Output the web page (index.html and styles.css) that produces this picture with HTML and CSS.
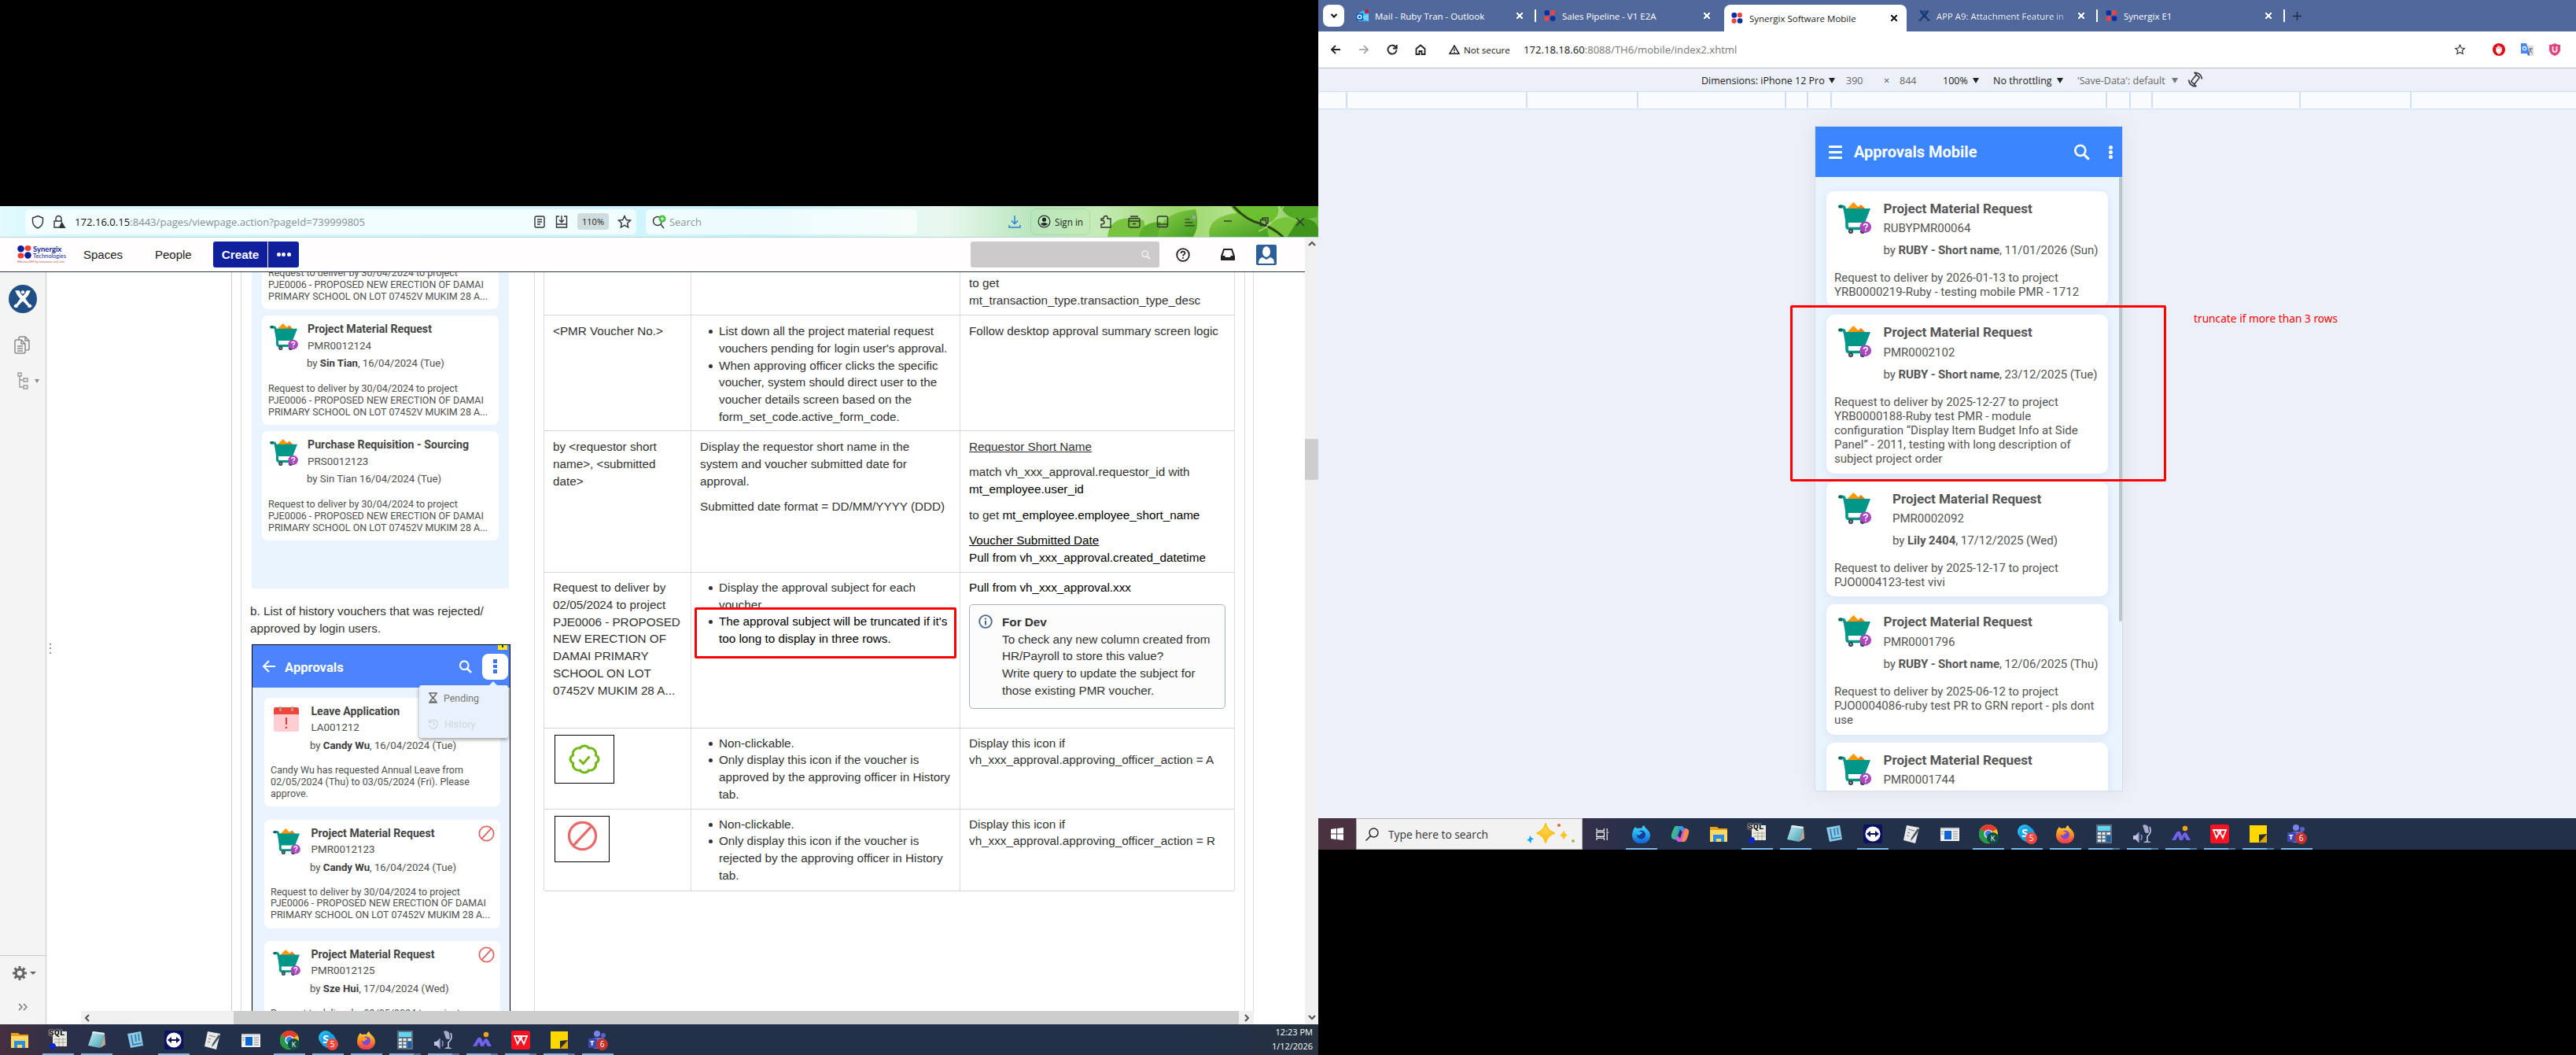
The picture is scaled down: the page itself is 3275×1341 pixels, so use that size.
FILE: index.html
```html
<!DOCTYPE html>
<html lang="en">
<head>
<meta charset="utf-8">
<title>Approvals Mobile review</title>
<link rel="stylesheet" href="styles.css">
</head>
<body>
<svg class="sprite" width="0" height="0" aria-hidden="true">
  <defs>
    <linearGradient id="g-flame" x1="0" y1="0" x2="0" y2="1"><stop offset="0" stop-color="#ffe141"/><stop offset=".5" stop-color="#ff8a1f"/><stop offset="1" stop-color="#f5305e"/></linearGradient>
    <linearGradient id="g-blue" x1="0" y1="0" x2="0" y2="1"><stop offset="0" stop-color="#3fe0ff"/><stop offset="1" stop-color="#0d63d8"/></linearGradient>
    <linearGradient id="g-note" x1="0" y1="0" x2="1" y2="1"><stop offset="0" stop-color="#c9f0f4"/><stop offset="1" stop-color="#3f9db5"/></linearGradient>
    <linearGradient id="g-star" x1="0" y1="0" x2="0" y2="1"><stop offset="0" stop-color="#ffe060"/><stop offset="1" stop-color="#fbb60d"/></linearGradient>
    <linearGradient id="g-leaf" x1="0" y1="0" x2="1" y2="1"><stop offset="0" stop-color="#8ed14c"/><stop offset="1" stop-color="#3f9a1c"/></linearGradient>
  </defs>
  <symbol id="cart" viewBox="0 0 42 40">
    <path d="M11 8.5 19.5 0 28 8.500z" fill="#ff9800"/><path d="M23 8.500 29 3l5.500 5.500z" fill="#f57c00"/>
    <path d="M2 5.500h4q1.500 0 2 2l3 9v14q0 3 3 3h20" fill="none" stroke="#009688" stroke-width="3.600"/>
    <path d="M0 5.500a2 2 0 0 1 2-2h3v4H2a2 2 0 0 1-2-2z" fill="#00695c"/>
    <path d="M6.500 8H41l-7 18H9.500z" fill="#009688"/>
    <circle cx="16" cy="37" r="3.100" fill="#37474f"/><circle cx="16" cy="37" r="1.200" fill="#90a4ae"/><circle cx="31" cy="37" r="3.100" fill="#37474f"/>
    <circle cx="34.700" cy="31.700" r="7.300" fill="#ab47bc"/>
    <path d="M32.300 29.800q.3-2.200 2.500-2.200t2.400 2q0 1.300-1.400 2-1 .5-1 1.700M34.800 34.600v1.600" fill="none" stroke="#fff" stroke-width="1.600"/>
  </symbol>
  <symbol id="ban" viewBox="0 0 24 24"><circle cx="12" cy="12" r="10.500" fill="none" stroke="currentColor" stroke-width="2"/><path d="M5 19.500 19 4.500" stroke="currentColor" stroke-width="2"/></symbol>
  <symbol id="search" viewBox="0 0 24 24"><circle cx="9.500" cy="9.500" r="7.500" fill="none" stroke="currentColor" stroke-width="3"/><path d="m15 15.500 7 7" stroke="currentColor" stroke-width="3.600"/></symbol>
  <symbol id="syn" viewBox="0 0 16 16"><rect width="7.500" height="7.500" rx="3" fill="#0b2fa3"/><rect x="8.300" width="7" height="7" rx="3" fill="#f0443e"/><rect y="8.600" width="7" height="7" rx="3" fill="#f0443e"/><rect x="8.300" y="8.200" width="7.500" height="7.500" rx="3" fill="#0b2fa3"/></symbol>
  <symbol id="conf" viewBox="0 0 24 24"><path d="M3 2h5q1 4 4 6.500Q15 6 16.500 2H21q-2 6-6 9.500 3 4 4.500 6.500 3 .5 3 2.500t-5 1.500q1.500-1.500-.5-2.500-2-2-5-5-3 3-5 5-2 1-.5 2.500-5 .5-5-1.500t3-2.500q1.500-2.500 4.500-6.500Q5 8 3 2z" fill="currentColor"/><circle cx="12" cy="4" r="2" fill="currentColor"/></symbol>
  <symbol id="i-folder" viewBox="0 0 24 24"><path d="M1 3h9l2 2h11v16H1z" fill="#e6a117"/><path d="M1 7h22v15H1z" fill="#ffd766"/><path d="M5 13h14v9h-4v-4H9v4H5z" fill="#2a8fe0"/></symbol>
  <symbol id="i-sql" viewBox="0 0 24 24"><path d="M5 1h18v19H5z" fill="#e9e9dc"/><path d="M7 11h15M7 15h15M13 9v11M18 9v11" stroke="#999" stroke-width=".8"/><circle cx="5" cy="20" r="4" fill="#0a27c8"/></symbol>
  <symbol id="i-note" viewBox="0 0 24 24"><path d="M7 1 22 3 16 22 1 19z" fill="url(#g-note)"/><path d="m22 3 1 15-7 4z" fill="#b9a995"/><path d="m7 1 15 2-.5 2L6 3z" fill="#eee"/></symbol>
  <symbol id="i-book" viewBox="0 0 24 24"><path d="m2 4 17-3 3 18-16 3z" fill="#8cc7e4"/><path d="m7 6 2 12 11-2M12 5l1 9M16 4l1 9" stroke="#2d7ba8" stroke-width="1.600" fill="none"/></symbol>
  <symbol id="i-tv" viewBox="0 0 24 24"><rect width="24" height="24" rx="3" fill="#0a1160"/><circle cx="12" cy="12" r="9.600" fill="#fff"/><path d="m4 12 5-4v3h6V8l5 4-5 4v-3H9v3z" fill="#0a1160"/></symbol>
  <symbol id="i-script" viewBox="0 0 24 24"><path d="m6 1 16 3-5 20L2 20z" fill="#e8e8e8"/><path d="M8 6l8 2M7 10l3 1M6 14l3 1" stroke="#777"/><path d="m20 5-8 12-1 4 3-3 8-11z" fill="#445261"/></symbol>
  <symbol id="i-win" viewBox="0 0 24 24"><rect y="4" width="24" height="17" fill="#f1f1f1"/><path d="M0 4h24v2H0z" fill="#c6c6c6"/><rect x="5" y="8" width="9" height="11" fill="#0b66d4"/><path d="M16 9h6M16 12h6M16 15h6M16 18h6M1 9h3M1 12h3" stroke="#888"/></symbol>
  <symbol id="i-chrome" viewBox="0 0 24 24"><circle cx="12" cy="12" r="12" fill="#fbc116"/><path d="M12 12 1.600 6A12 12 0 0 1 22.400 6z" fill="#e33b2e"/><path d="M12 12 1.600 6A12 12 0 0 0 12 24z" fill="#229a47"/><circle cx="12" cy="12" r="5.600" fill="#fff"/><circle cx="12" cy="12" r="4.400" fill="#3b7ded"/></symbol>
  <symbol id="i-skype" viewBox="0 0 24 24"><circle cx="9" cy="9" r="9" fill="#28b8ee"/><circle cx="15" cy="15" r="8.500" fill="#0a86d8"/><circle cx="12" cy="12" r="9.500" fill="#17a3e5"/></symbol>
  <symbol id="i-fox" viewBox="0 0 24 24"><path d="M4 3q1 2 3 2 3-1 5 0 1-3 3-4 1 3 4 5 4 4 4 8a11.500 10.500 0 0 1-23 0Q0 8 4 3z" fill="url(#g-flame)"/><circle cx="11.500" cy="13" r="5.500" fill="#7b49d8"/><path d="M4 8q4-1 6 1 3 0 3 2-3 1-4 3-4-1-5-6z" fill="#ff9a22"/></symbol>
  <symbol id="i-foxb" viewBox="0 0 24 24"><path d="M4 3q1 2 3 2 3-1 5 0 1-3 3-4 1 3 4 5 4 4 4 8a11.500 10.500 0 0 1-23 0Q0 8 4 3z" fill="url(#g-blue)"/><circle cx="11.500" cy="13" r="5.500" fill="#173b9b"/><path d="M4 8q4-1 6 1 3 0 3 2-3 1-4 3-4-1-5-6z" fill="#27b9f4"/></symbol>
  <symbol id="i-calc" viewBox="0 0 24 24"><rect x="2" width="20" height="24" fill="#5c6f80"/><rect x="4" y="2" width="16" height="6" fill="#5fd7f3"/><path d="M4 10h4v3H4zM9.500 10h4v3h-4zM4 14.500h4v3H4zM9.500 14.500h4v3h-4zM4 19h4v3H4zM9.500 19h4v3h-4zM15.500 10h4.500v3h-4.500z" fill="#e8eef2"/><path d="M15.500 14.500H20V22h-4.500z" fill="#1261b5"/></symbol>
  <symbol id="i-mic" viewBox="0 0 24 24"><path d="M0 14h3l4-4v13l-4-4H0z" fill="#bfc3de"/><path d="M7 10v13M10 13q2 3 0 7" stroke="#8a8fc0" stroke-width="1.600" fill="none"/><path d="M12 1q5-2 7 2l1 7q-2 2-5 0z" fill="#a7abcb"/><path d="M21 3q3 7-3 12v6" stroke="#c9cce6" stroke-width="1.600" fill="none"/><path d="M13 23q4-4 10 0z" fill="#b9bcd6"/></symbol>
  <symbol id="i-m" viewBox="0 0 24 24"><circle cx="17" cy="5" r="3.200" fill="#f6a31c"/><path d="M0 20 6 10q3-3 5 0l2 5 2-4q2-2 4 0l5 9h-5l-3-5-2 5h-4L8 14l-3 6z" fill="#7162ee"/></symbol>
  <symbol id="i-wps" viewBox="0 0 24 24"><rect width="24" height="24" rx="3" fill="#fb1120"/><path d="M3 7h18M4 7l4 10 4-8 4 8 4-10M8.500 7l3 6M14 7l-2 4" stroke="#fff" stroke-width="1.800" fill="none"/></symbol>
  <symbol id="i-sticky" viewBox="0 0 24 24"><path d="M1 1h22v11L14 23H1z" fill="#ffd800"/><path d="M23 12v11h-9z" fill="#e0a800"/><path d="M23 12 13 13v10z" fill="#2e2c2c"/></symbol>
  <symbol id="i-teams" viewBox="0 0 24 24"><circle cx="11" cy="4" r="4" fill="#7b83eb"/><circle cx="19" cy="6" r="3" fill="#5b62c8"/><rect x="5" y="9" width="16" height="14" rx="4" fill="#6c74e0"/><rect y="10" width="11" height="12" rx="1" fill="#3f47b5"/></symbol>
</svg>

<div class="desk">
  <section class="left">
    <header class="fx-bar">
      <svg class="leaves" viewBox="0 0 288 39">
        <path d="M20 40Q22 8 66 18q4 14 0 22z" fill="#79c43e"/><path d="M60 40q2-20 28-20 0 14-4 20z" fill="#5caf2a"/>
        <path d="M84 40Q84 8 132 4q6 22-4 36z" fill="url(#g-leaf)"/><path d="M150 40q-6-28 40-32 30 14 44 32z" fill="url(#g-leaf)"/><path d="M176 0q20 26 56 20Q240 6 236 0z" fill="#6cc030"/>
        <path d="M226 40q-10-20 20-26 26 4 24 26z" fill="#77c53b"/><path d="M240 0q10 24 46 14l2-14z" fill="#53a824"/><path d="M262 18q20-6 26 10v12h-40z" fill="#3f941c"/>
        <path d="M180 0q16 18 34 22 18 6 30 18" stroke="#2c4a14" stroke-width="3" fill="none"/><path d="M244 0q-10 22-32 32" stroke="#a7db72" stroke-width="1.500" fill="none"/>
      </svg>
      <div class="fx-url">
        <svg class="i18" viewBox="0 0 18 18"><path d="M9 1.500 15.500 4v4q0 6-6.500 9Q2.500 14 2.500 8V4z" class="ln"/></svg>
        <svg class="i18 ml9" viewBox="0 0 18 18"><path d="M5 8V5a3.500 3.500 0 0 1 7 0v3M9 16H3V8h10" class="ln"/><path d="m12.500 8.500 5 8.500h-9z" fill="#333"/></svg>
        <span class="fx-addr"><b>172.16.0.15</b>:8443/pages/viewpage.action?pageId=739999805</span>
        <svg class="i18" viewBox="0 0 18 18"><rect x="3" y="2" width="12" height="14" rx="2" class="ln"/><path d="M6 6h6M6 9h6M6 12h4" class="ln"/></svg>
        <svg class="i18 ml10" viewBox="0 0 18 18"><path d="M6 2H2.500v10h13V2H12M2.500 12v4h13v-4M9 1v8M6 6.500 9 9.500l3-3" class="ln"/></svg>
        <span class="pill">110%</span>
        <svg class="i18 ml11" viewBox="0 0 18 18"><path d="m9 1.500 2.300 5 5.200.6-3.900 3.600 1.100 5.300L9 13.400 4.300 16l1.100-5.300L1.500 7.100l5.200-.6z" class="ln"/></svg>
      </div>
      <div class="fx-search"><svg width="20" height="18" viewBox="0 0 20 18"><circle cx="8" cy="8" r="5.500" class="ln"/><path d="m12 12 4 5" class="ln"/><circle cx="14" cy="5" r="4.500" fill="#3fbf3a"/><path d="M14 2.500v5M11.500 5h5" stroke="#fff" stroke-width="1.200"/></svg><span>Search</span></div>
      <svg class="i18 ml115" viewBox="0 0 18 18"><path d="M9 1v10M5 7.500l4 4 4-4M2 13v3h14v-3" fill="none" stroke="#2f80dd" stroke-width="1.500"/></svg>
      <div class="signin"><svg width="17" height="17" viewBox="0 0 18 18"><circle cx="9" cy="9" r="7.800" class="ln"/><circle cx="9" cy="6.500" r="2.700" fill="#222"/><path d="M4 12.500q5-4 10 0-5 4.500-10 0z" fill="#222"/></svg><span>Sign in</span></div>
      <svg class="i18 ml11" viewBox="0 0 18 18"><path d="M3 16V12q4 0 4-2.500T3 7V5h3q-.5-3 2.500-3.500T11 5h4v11z" class="ln"/></svg>
      <svg class="i18 ml18" viewBox="0 0 18 18"><path d="M4 2h10M2 8V6q0-1.500 1.500-1.500h11Q16 4.500 16 6v8q0 2-2 2H4q-2 0-2-2zh14M7 11.500h4" class="ln"/></svg>
      <svg class="i18 ml18" viewBox="0 0 18 18"><rect x="2.500" y="2" width="13" height="13.500" rx="2" class="ln"/><path d="M2.500 12h13" class="ln"/></svg>
      <svg class="i18 ml17" viewBox="0 0 22 20"><path d="M3 6h8M3 11h12M3 16h15" class="ln"/><circle cx="17" cy="3" r="3" fill="#a8a0b4"/></svg>
      <svg class="i18 ml30" viewBox="0 0 18 18"><path d="M4 8h10" class="ln"/></svg>
      <svg class="i18 ml28" viewBox="0 0 18 18"><path d="M4.500 6.500h7v7h-7zM7 6V4h7v7h-2" class="ln"/></svg>
      <svg class="i18 ml28" viewBox="0 0 18 18"><path d="m4 4 10 10M14 4 4 14" class="ln"/></svg>
    </header>

    <div class="fx-view">
      <div class="fx-page">
        <nav class="cf-nav">
          <div class="brand">
            <svg width="19" height="17" viewBox="0 0 19 17"><ellipse cx="4.500" cy="4.200" rx="4.300" ry="4.200" fill="#101f9c"/><ellipse cx="13.500" cy="3.500" rx="4" ry="3.400" fill="#ee4035"/><ellipse cx="4.500" cy="13" rx="4" ry="3.400" fill="#ee4035"/><ellipse cx="13.500" cy="12.500" rx="4.300" ry="4.200" fill="#101f9c"/></svg>
            <span class="bname"><b>Synergix</b><i>Technologies</i></span>
            <small>Effective ERP by Innovation and Care</small>
          </div>
          <a class="nv nv1">Spaces</a><a class="nv nv2">People</a>
          <button class="create">Create</button><button class="more"><i></i><i></i><i></i></button>
          <div class="cf-search"><svg width="12" height="12"><use href="#search"/></svg></div>
          <svg class="cf-help" width="18" height="18" viewBox="0 0 18 18"><circle cx="9" cy="9" r="7.800" fill="none" stroke="#222" stroke-width="1.800"/><path d="M6.500 7q.2-2.300 2.500-2.300t2.500 2q0 1.300-1.500 2-1 .6-1 1.800M9 12v1.800" fill="none" stroke="#222" stroke-width="1.700"/></svg>
          <svg class="cf-tray" width="18" height="15" viewBox="0 0 18 15"><path d="M4 1h10l3 9v4H1v-4z" fill="none" stroke="#222" stroke-width="2"/><path d="M1 9h4l1 2h6l1-2h4v5H1z" fill="#222"/></svg>
          <svg class="cf-user" width="26" height="26" viewBox="0 0 26 26"><rect width="26" height="26" rx="2" fill="#2c5f98"/><ellipse cx="13" cy="9" rx="5" ry="6.800" fill="#fff"/><path d="M3 24q0-7 5-8l5 3 5-3q5 1 5 8z" fill="#fff"/></svg>
        </nav>
        <div class="cf-body">
          <aside class="cf-side">
            <div class="space"><svg width="26" height="26"><use href="#conf"/></svg></div>
            <svg class="s-pages" width="20" height="23" viewBox="0 0 20 23"><path d="M6 5V3q0-2 2-2h6l5 5v10q0 2-2 2h-2M14 1v5h5M3 5h6l5 5v10q0 2-2 2H3q-2 0-2-2V7q0-2 2-2zM9 5v5h5M4 13h7M4 16h7M4 19h7" fill="none" stroke="#8a8a8a" stroke-width="1.500"/></svg>
            <div class="s-tree"><svg width="14" height="22" viewBox="0 0 14 22"><path d="M1 1h4v4H1zM3 5v14h4M3 10h4M8 8h5v4H8zM8 17h5v4H8z" fill="none" stroke="#999" stroke-width="1.400"/></svg><i class="tri"></i></div>
            <div class="s-foot">
              <div class="s-gear"><svg width="18" height="18" viewBox="0 0 18 18"><circle cx="9" cy="9" r="4.800" fill="none" stroke="#666" stroke-width="3"/><path d="M9 0v4M9 14v4M0 9h4M14 9h4M2.600 2.600l3 3M12.400 12.400l3 3M2.600 15.400l3-3M12.400 5.600l3-3" stroke="#666" stroke-width="3"/></svg><i class="tri dk"></i></div>
              <svg class="s-chev" width="12" height="10" viewBox="0 0 12 10"><path d="m1 1 4 4-4 4M7 1l4 4-4 4" fill="none" stroke="#777" stroke-width="1.500"/></svg>
            </div>
          </aside>
          <div class="cf-main">
            <div class="handle"></div>
            <div class="doc">
              <div class="doc-in">
                <div class="col-a">
                  <div class="mock mock1">
                    <article class="mc"><p>Request to deliver by 30/04/2024 to project<br>PJE0006 - PROPOSED NEW ERECTION OF DAMAI<br>PRIMARY SCHOOL ON LOT 07452V MUKIM 28 A...</p></article>
                    <article class="mc">
                      <div class="mh"><svg width="36" height="34"><use href="#cart"/></svg><div><h4>Project Material Request</h4><h5>PMR0012124</h5><h6>by <b>Sin Tian</b>, 16/04/2024 (Tue)</h6></div></div>
                      <p>Request to deliver by 30/04/2024 to project<br>PJE0006 - PROPOSED NEW ERECTION OF DAMAI<br>PRIMARY SCHOOL ON LOT 07452V MUKIM 28 A...</p>
                    </article>
                    <article class="mc">
                      <div class="mh"><svg width="36" height="34"><use href="#cart"/></svg><div><h4>Purchase Requisition - Sourcing</h4><h5>PRS0012123</h5><h6>by Sin Tian 16/04/2024 (Tue)</h6></div></div>
                      <p>Request to deliver by 30/04/2024 to project<br>PJE0006 - PROPOSED NEW ERECTION OF DAMAI<br>PRIMARY SCHOOL ON LOT 07452V MUKIM 28 A...</p>
                    </article>
                  </div>
                  <p class="cap">b. List of history vouchers that was rejected/<br>approved by login users.</p>
                  <div class="mock mock2">
                    <div class="m2h">
                      <svg width="18" height="16" viewBox="0 0 18 16"><path d="M17 8H2M9 1 2 8l7 7" fill="none" stroke="#fff" stroke-width="2"/></svg>
                      <strong>Approvals</strong>
                      <svg class="m2s" width="18" height="17"><use href="#search"/></svg>
                      <span class="kebab"><i></i><i></i><i></i></span>
                      <em class="flag"></em>
                    </div>
                    <div class="menu">
                      <span><svg width="13" height="14" viewBox="0 0 13 14"><path d="M1 1h11M1 13h11M3 1v2l3.500 4L10 3V1M3 13v-2l3.500-4 3.500 4v2M4 12h5" fill="none" stroke="#666" stroke-width="1.500"/></svg>Pending</span>
                      <span class="off"><svg width="14" height="14" viewBox="0 0 14 14"><path d="M1.500 1.500V5H5M2 5a5.500 5.500 0 1 1-.5 3.500M7.500 4v3.500l2 1.500" fill="none" stroke="#d0d6dc" stroke-width="1.300"/></svg>History</span>
                    </div>
                    <article class="mc">
                      <div class="mh"><svg width="32" height="32" viewBox="0 0 32 32"><path d="M0 8h32v21q0 3-3 3H3q-3 0-3-3z" fill="#ffcdd2"/><path d="M0 10V4q0-3 3-3h26q3 0 3 3v6z" fill="#ef4438"/><path d="M8.500 0v6M23.500 0v6" stroke="#b0a4a4" stroke-width="2.500"/><path d="M16 14v9M16 25.500v2.500" stroke="#f03a2e" stroke-width="2"/></svg><div><h4>Leave Application</h4><h5>LA001212</h5><h6>by <b>Candy Wu</b>, 16/04/2024 (Tue)</h6></div></div>
                      <p>Candy Wu has requested Annual Leave from<br>02/05/2024 (Thu) to 03/05/2024 (Fri). Please<br>approve.</p>
                    </article>
                    <article class="mc">
                      <div class="mh"><svg width="35" height="33"><use href="#cart"/></svg><div><h4>Project Material Request</h4><h5>PMR0012123</h5><h6>by <b>Candy Wu</b>, 16/04/2024 (Tue)</h6></div><svg class="ban" width="21" height="21"><use href="#ban"/></svg></div>
                      <p>Request to deliver by 30/04/2024 to project<br>PJE0006 - PROPOSED NEW ERECTION OF DAMAI<br>PRIMARY SCHOOL ON LOT 07452V MUKIM 28 A...</p>
                    </article>
                    <article class="mc">
                      <div class="mh"><svg width="35" height="33"><use href="#cart"/></svg><div><h4>Project Material Request</h4><h5>PMR0012125</h5><h6>by <b>Sze Hui</b>, 17/04/2024 (Wed)</h6></div><svg class="ban" width="21" height="21"><use href="#ban"/></svg></div>
                      <p>Request to deliver by 03/05/2024 to project</p>
                    </article>
                  </div>
                </div>
                <div class="tbl">
                  <div class="tr r0"><div></div><div></div><div class="end">to get<br>mt_transaction_type.transaction_type_desc</div></div>
                  <div class="tr r1"><div>&lt;PMR Voucher No.&gt;</div><div><ul><li>List down all the project material request<br>vouchers pending for login user's approval.</li><li>When approving officer clicks the specific<br>voucher, system should direct user to the<br>voucher details screen based on the<br>form_set_code.active_form_code.</li></ul></div><div>Follow desktop approval summary screen logic</div></div>
                  <div class="tr r2"><div>by &lt;requestor short<br>name&gt;, &lt;submitted<br>date&gt;</div><div><p>Display the requestor short name in the<br>system and voucher submitted date for<br>approval.</p><p>Submitted date format = DD/MM/YYYY (DDD)</p></div><div><p><u>Requestor Short Name</u></p><p>match vh_xxx_approval.requestor_id with<br><span class="k">mt_employee.user_id</span></p><p>to get <span class="k">mt_employee.employee_short_name</span></p><p class="k"><u>Voucher Submitted Date</u><br>Pull from vh_xxx_approval.created_datetime</p></div></div>
                  <div class="tr r3"><div>Request to deliver by<br>02/05/2024 to project<br>PJE0006 - PROPOSED<br>NEW ERECTION OF<br>DAMAI PRIMARY<br>SCHOOL ON LOT<br>07452V MUKIM 28 A...</div><div><ul><li>Display the approval subject for each<br>voucher.</li></ul><div class="snip"><ul><li>The approval subject will be truncated if it's<br>too long to display in three rows.</li></ul></div></div><div><span class="k">Pull from vh_xxx_approval.xxx</span><div class="info"><svg width="18" height="18" viewBox="0 0 18 18"><circle cx="9" cy="9" r="7.800" fill="none" stroke="#4a6785" stroke-width="1.800"/><path d="M9 8v5.500M9 4.500v2" stroke="#4a6785" stroke-width="2"/></svg><div><b>For Dev</b><br>To check any new column created from<br>HR/Payroll to store this value?<br>Write query to update the subject for<br>those existing PMR voucher.</div></div></div></div>
                  <div class="tr r4"><div><span class="thumb t1"><svg width="40" height="38" viewBox="0 0 40 38"><path d="M20 2q4 0 5.500 3 4-1 7 2t2 7q3.500 2 3.500 5t-3.500 5q1 4-2 7t-7 2q-1.500 3-5.500 3t-5.500-3q-4 1-7-2t-2-7Q2 22 2 19t3.500-5q-1-4 2-7t7-2Q16 2 20 2z" fill="none" stroke="#74b816" stroke-width="3"/><path d="m13.500 19.500 5 5 8-9" fill="none" stroke="#74b816" stroke-width="3"/></svg></span></div><div><ul><li>Non-clickable.</li><li>Only display this icon if the voucher is<br>approved by the approving officer in History<br>tab.</li></ul></div><div>Display this icon if<br>vh_xxx_approval.approving_officer_action = A</div></div>
                  <div class="tr r5"><div><span class="thumb t2"><svg width="39" height="39"><use href="#ban"/></svg></span></div><div><ul><li>Non-clickable.</li><li>Only display this icon if the voucher is<br>rejected by the approving officer in History<br>tab.</li></ul></div><div>Display this icon if<br>vh_xxx_approval.approving_officer_action = R</div></div>
                </div>
              </div>
            </div>
            <div class="hscroll"><svg class="ar" width="8" height="10" viewBox="0 0 8 10"><path d="M6 1 2 5l4 4" class="sa"/></svg><span></span><svg class="ar" width="8" height="10" viewBox="0 0 8 10"><path d="m2 1 4 4-4 4" class="sa"/></svg></div>
          </div>
        </div>
      </div>
      <div class="vscroll"><svg width="10" height="8" viewBox="0 0 10 8"><path d="m1 6 4-4 4 4" class="sa"/></svg><span></span><svg width="10" height="8" viewBox="0 0 10 8"><path d="m1 2 4 4 4-4" class="sa"/></svg></div>
    </div>

    <footer class="task">
      <span><svg><use href="#i-folder"/></svg></span><span class="on"><svg><use href="#i-sql"/></svg><b class="sql">SQL</b></span><span class="on"><svg><use href="#i-note"/></svg></span><span><svg><use href="#i-book"/></svg></span><span class="on"><svg><use href="#i-tv"/></svg></span><span><svg><use href="#i-script"/></svg></span><span><svg><use href="#i-win"/></svg></span><span class="on"><svg><use href="#i-chrome"/></svg><b class="bdg gr">K</b></span><span class="on"><svg><use href="#i-skype"/></svg><b class="ltr">S</b><b class="bdg">5</b></span><span class="on"><svg><use href="#i-fox"/></svg></span><span class="on two"><svg><use href="#i-calc"/></svg></span><span class="on two"><svg><use href="#i-mic"/></svg></span><span class="on two"><svg><use href="#i-m"/></svg></span><span class="on two"><svg><use href="#i-wps"/></svg></span><span class="on two"><svg><use href="#i-sticky"/></svg></span><span class="on"><svg><use href="#i-teams"/></svg><b class="tlt">T</b><b class="bdg dr">6</b></span>
      <div class="clock">12:23 PM<br>1/12/2026</div>
    </footer>
  </section>

  <section class="right">
    <div class="tabs">
      <span class="tsearch"><svg width="10" height="8" viewBox="0 0 10 8"><path d="m1.500 2 3.500 3.500L8.500 2" fill="none" stroke="#111" stroke-width="2"/></svg></span>
      <div class="tab t-a"><svg width="16" height="16" viewBox="0 0 16 16"><path d="M3 5 9 1l7 4v10H3z" fill="#35b5f0"/><path d="m4 9 12 6V6z" fill="#6fd3fa"/><rect y="5" width="9" height="9" rx="1.500" fill="#0f5fc0"/><circle cx="4.500" cy="9.500" r="2.400" fill="none" stroke="#fff" stroke-width="1.300"/><circle cx="13.500" cy="2.500" r="2.500" fill="#d4122a"/></svg><span>Mail - Ruby Tran - Outlook</span><i class="x"></i></div><i class="sep"></i>
      <div class="tab t-b"><svg width="15" height="14"><use href="#syn"/></svg><span>Sales Pipeline - V1 E2A</span><i class="x"></i></div>
      <div class="tab t-c"><svg width="15" height="14"><use href="#syn"/></svg><span>Synergix Software Mobile</span><i class="x"></i></div>
      <div class="tab t-d"><svg width="17" height="16"><use href="#conf"/></svg><span class="fade">APP A9: Attachment Feature in</span><i class="x"></i></div><i class="sep"></i>
      <div class="tab t-e"><svg width="15" height="14"><use href="#syn"/></svg><span>Synergix E1</span><i class="x"></i></div><i class="sep"></i>
      <svg class="plus" width="11" height="11" viewBox="0 0 11 11"><path d="M5.500 0v11M0 5.500h11" stroke="#222c48" stroke-width="1.500"/></svg>
    </div>
    <div class="addr">
      <svg class="ba" width="14" height="14" viewBox="0 0 14 14"><path d="M13 7H2M7 2 2 7l5 5" fill="none" stroke="#222" stroke-width="1.800"/></svg>
      <svg class="bb" width="14" height="14" viewBox="0 0 14 14"><path d="M1 7h11M7 2l5 5-5 5" fill="none" stroke="#999" stroke-width="1.600"/></svg>
      <svg class="bb" width="14" height="14" viewBox="0 0 14 14"><path d="M12.500 7.500a5.500 5.500 0 1 1-1.300-4L12 5M12.700 1v4.500H8" fill="none" stroke="#222" stroke-width="1.900"/></svg>
      <svg class="bb" width="14" height="14" viewBox="0 0 14 14"><path d="M1.500 13V6L7 1.500 12.500 6v7h-4V9h-3v4z" fill="none" stroke="#222" stroke-width="1.800"/></svg>
      <svg class="warn" width="14" height="12" viewBox="0 0 14 12"><path d="m7 1 6 10.300H1z" fill="none" stroke="#222" stroke-width="1.500"/><path d="M7 4.500V8M7 9v1.300" stroke="#222" stroke-width="1.400"/></svg>
      <span class="ns">Not secure</span><span class="ru"><b>172.18.18.60</b>:8088/TH6/mobile/index2.xhtml</span>
      <svg width="15" height="14" viewBox="0 0 18 18"><path d="m9 1.500 2.300 5 5.200.6-3.900 3.600 1.100 5.300L9 13.400 4.300 16l1.100-5.300L1.500 7.100l5.200-.6z" fill="none" stroke="#333" stroke-width="1.500"/></svg>
      <svg class="e1" width="16" height="16" viewBox="0 0 16 16"><circle cx="8" cy="8" r="8" fill="#e00914"/><path d="M5 8V5M7 8V3M9 8V3.500M11 8V5M5 8h6v2q-3 6-6 0z" stroke="#fff" stroke-width="1.500" fill="#fff"/></svg>
      <svg class="e2" width="16" height="16" viewBox="0 0 16 16"><path d="M6 3h10v13H8z" fill="#dcdcdc"/><path d="M0 0h7l4 13H0z" fill="#4688f1"/><path d="M8 13h3l-1 3z" fill="#2a4fa8"/><circle cx="4.500" cy="6.500" r="2.200" fill="none" stroke="#fff" stroke-width="1.200"/><path d="M10 7h5M12.500 6v1q0 3-2.500 5M11 8.500l3.500 4" stroke="#5c6a70" fill="none"/></svg>
      <svg class="e2" width="14" height="16" viewBox="0 0 14 16"><path d="M0 2q4 0 7-2 3 2 7 2v7q-1 5-7 7-6-2-7-7z" fill="#e6427f"/><path d="M4.500 4v4.500q0 2.500 2.500 2.500t2.500-2.500V4" fill="none" stroke="#fff" stroke-width="1.700"/></svg>
    </div>
    <div class="dev">
      <span class="d1">Dimensions: iPhone 12 Pro</span><i class="tr8"></i><span class="d2">390</span><span class="d3">×</span><span class="d4">844</span><span class="d5">100%</span><i class="tr8 w"></i><span class="d6">No throttling</span><i class="tr8"></i><span class="d7">'Save-Data': default</span><i class="tr8 g"></i>
      <svg class="rot" width="20" height="20" viewBox="0 0 20 20"><rect x="7.300" y="4.500" width="5.400" height="11" rx="1" transform="rotate(38 10 10)" fill="none" stroke="#333" stroke-width="1.500"/><path d="M9 1.200q8 0 9.500 8.300M11 18.800Q3 18.800 1.500 10.500M8.500 1.200 12 4M11.500 18.800 8 16" fill="none" stroke="#333" stroke-width="1.600"/></svg>
    </div>
    <div class="ruler"><i></i><i></i><i></i><i></i><i></i><i></i><i></i><i></i><i></i><i></i><i></i></div>
    <div class="stage">
      <div class="phone">
        <div class="ph">
          <span class="burger"><i></i><i></i><i></i></span><strong>Approvals Mobile</strong>
          <svg width="22" height="21"><use href="#search"/></svg><span class="dots"><i></i><i></i><i></i></span>
        </div>
        <div class="pb">
          <article class="pc"><div class="pr"><svg width="42" height="40"><use href="#cart"/></svg><div><h4>Project Material Request</h4><h5>RUBYPMR00064</h5><h6>by <b>RUBY - Short name</b>, 11/01/2026 (Sun)</h6></div></div><p>Request to deliver by 2026-01-13 to project<br>YRB0000219-Ruby - testing mobile PMR - 1712</p></article>
          <article class="pc p2 low"><div class="pr"><svg width="42" height="40"><use href="#cart"/></svg><div><h4>Project Material Request</h4><h5>PMR0002102</h5><h6>by <b>RUBY - Short name</b>, 23/12/2025 (Tue)</h6></div></div><p>Request to deliver by 2025-12-27 to project<br>YRB0000188-Ruby test PMR - module<br>configuration “Display Item Budget Info at Side<br>Panel” - 2011, testing with long description of<br>subject project order</p></article>
          <article class="pc p3"><div class="pr wide"><svg width="42" height="40"><use href="#cart"/></svg><div><h4>Project Material Request</h4><h5>PMR0002092</h5><h6>by <b>Lily 2404</b>, 17/12/2025 (Wed)</h6></div></div><p>Request to deliver by 2025-12-17 to project<br>PJO0004123-test vivi</p></article>
          <article class="pc p4 low"><div class="pr"><svg width="42" height="40"><use href="#cart"/></svg><div><h4>Project Material Request</h4><h5>PMR0001796</h5><h6>by <b>RUBY - Short name</b>, 12/06/2025 (Thu)</h6></div></div><p>Request to deliver by 2025-06-12 to project<br>PJO0004086-ruby test PR to GRN report - pls dont<br>use</p></article>
          <article class="pc"><div class="pr"><svg width="42" height="40"><use href="#cart"/></svg><div><h4>Project Material Request</h4><h5>PMR0001744</h5></div></div></article>
          <i class="psb"></i>
        </div>
      </div>
      <div class="mark"></div>
      <div class="remark">truncate if more than 3 rows</div>
    </div>
    <footer class="task rt">
      <span class="start"><svg width="16" height="16" viewBox="0 0 16 16"><path d="M0 2 7 1v6.500H0zM8 1l8-1v7.500H8zM0 8.500h7V15l-7-1zM8 8.500h8V16l-8-1z" fill="#fff"/></svg></span>
      <div class="tsb"><svg width="17" height="17" viewBox="0 0 17 17"><circle cx="10.500" cy="6.500" r="5.500" fill="none" stroke="#222" stroke-width="1.400"/><path d="m6.500 10.500-6 6" stroke="#222" stroke-width="1.400"/></svg><span>Type here to search</span>
        <svg class="spark" width="62" height="28" viewBox="0 0 62 28"><path d="M24 1q2 9 11 12-9 3-11 12-2-9-11-12 9-3 11-12z" fill="url(#g-star)" stroke="#fbc324" stroke-width="2" stroke-linejoin="round"/><path d="M47 9q1 5 5 6.500-4 1.500-5 6.500-1-5-5-6.500 4-1.500 5-6.500z" fill="#fbc324"/><path d="m4 16 2 3 3 1-3 2-1 4-2-3-3-1 3-2z" fill="#12a4f0"/><circle cx="41" cy="3" r="2" fill="#f2632a"/><circle cx="59" cy="23" r="2" fill="#8cc63f"/></svg></div>
      <span class="tv"><svg viewBox="0 0 18 18"><path d="M1 1v3h10V1M1 17v-3h10v3M1 6h10v6H1zM15 1v4M15 8v9M14 6.500h3" fill="none" stroke="#fff" stroke-width="1.200"/></svg></span>
      <span class="on"><svg><use href="#i-foxb"/></svg></span><span><svg viewBox="0 0 24 24"><path d="M7 2h7q2 0 3 3l1 3-4 1-2-3-4 12q-1 3-3 1-4 0-4-4 0-4 3-10 1-3 4-3z" fill="#2f9be0"/><path d="M1 13 4 5q1-3 3-3h3L6 17q-1 3-3 1-3-1-2-5z" fill="#3fb98a"/><path d="M17 22h-7q-2 0-3-3l-1-3 4-1 2 3 4-12q1-2 3-1 4 0 4 4 0 4-3 10-1 3-3 3z" fill="#d65bd0"/><path d="m23 11-3 8q-1 3-3 3h-3l4-15q1-3 3-1 3 1 2 5z" fill="#f98a4a"/></svg></span><span><svg><use href="#i-folder"/></svg></span><span class="on"><svg><use href="#i-sql"/></svg><b class="sql">SQL</b></span><span class="on"><svg><use href="#i-note"/></svg></span><span><svg><use href="#i-book"/></svg></span><span class="on"><svg><use href="#i-tv"/></svg></span><span><svg><use href="#i-script"/></svg></span><span><svg><use href="#i-win"/></svg></span><span class="on"><svg><use href="#i-chrome"/></svg><b class="bdg gr">K</b></span><span class="on"><svg><use href="#i-skype"/></svg><b class="ltr">S</b><b class="bdg">5</b></span><span class="on"><svg><use href="#i-fox"/></svg></span><span class="on two"><svg><use href="#i-calc"/></svg></span><span class="on two"><svg><use href="#i-mic"/></svg></span><span class="on two"><svg><use href="#i-m"/></svg></span><span class="on two"><svg><use href="#i-wps"/></svg></span><span class="on two"><svg><use href="#i-sticky"/></svg></span><span class="on"><svg><use href="#i-teams"/></svg><b class="tlt">T</b><b class="bdg dr">6</b></span>
    </footer>
  </section>
</div>
</body>
</html>
```
FILE: styles.css
```css
*{box-sizing:border-box}
html,body{margin:0;background:#000}
body{font-family:"Open Sans","Noto Sans",sans-serif;color:#222}
h4,h5,h6,p,ul{margin:0;padding:0}
svg{display:block;flex:none}
.sprite{position:absolute}
.desk{display:flex;width:3275px;height:1341px;overflow:hidden;background:#000}
.left{width:1676px;height:1079px;margin-top:262px;display:flex;flex-direction:column;flex:none}
.right{width:1599px;height:1080px;display:flex;flex-direction:column;flex:none}

/* Firefox window */
.fx-bar{position:relative;height:40px;display:flex;align-items:center;border-bottom:1px solid #b6d3d6;background:linear-gradient(90deg,#e3fafe 0,#d6f7fd 60px,#cff5fc 850px,#c3f1fb 960px,#d8f6f6 1080px,#e9f8ef 1200px,#b9e6bd 1310px,#c5ebb6 1400px,#9ad768 1500px,#bfe7a0 1600px,#6dbb3d 1676px)}
.leaves{position:absolute;right:0;top:0;width:288px;height:39px}
.fx-bar>*{flex:none}
.fx-bar>svg:not(.leaves),.signin{position:relative}
.ln{fill:none;stroke:#333;stroke-width:1.4}
.i18{width:18px;height:18px}
.ml9{margin-left:9px}.ml10{margin-left:10px}.ml11{margin-left:11px}.ml17{margin-left:17px}.ml18{margin-left:18px}.ml28{margin-left:28px}.ml30{margin-left:30px}.ml115{margin-left:115px}
.fx-url{margin-left:32px;width:777px;height:32px;border-radius:6px;background:rgba(255,255,255,.68);display:flex;align-items:center;padding:0 6px 0 7px}
.fx-addr{flex:1;margin-left:11px;font-size:13.1px;color:#829294;white-space:nowrap}
.fx-addr b,.ru b{font-weight:400;color:#111}
.pill{margin-left:11px;width:40px;height:21px;border-radius:4px;background:#cfdcdd;font-size:11px;line-height:21px;text-align:center;color:#222}
.fx-search{margin-left:12px;width:345px;height:32px;border-radius:6px;background:rgba(255,255,255,.68);display:flex;align-items:center;padding-left:7px;font-size:12.9px;color:#8a9698}
.fx-search span{margin-left:3px}
.signin{margin-left:11px;width:76px;height:34px;border-radius:7px;border:1px solid rgba(80,120,90,.16);display:flex;align-items:center;padding-left:8px;font-size:11.7px}
.signin span{margin-left:5px}
.fx-view{display:flex;height:1000px}
.fx-page{width:1659px;display:flex;flex-direction:column;background:#fff}
.vscroll{width:17px;background:#f0f0f0;display:flex;flex-direction:column;align-items:center;padding:4px 0 5px}
.vscroll span{width:17px;height:52px;background:#cdcdcd;margin-top:244px;margin-bottom:auto}
.sa{fill:none;stroke:#505050;stroke-width:2}

.cf-nav{height:44px;flex:none;display:flex;align-items:center;background:#fffdfe;border-bottom:1px solid #2b3b55;font-family:"Liberation Sans",Arial,sans-serif}
.brand{margin-left:22px;width:84px;height:26px;display:grid;grid-template-columns:19px 60px;grid-template-rows:18px 7px;color:#101f9c;margin-top:2px}
.bname{display:block;font-family:Lato,sans-serif;line-height:9px;margin-left:1px}
.bname b{display:block;font-size:9.5px}.bname i{display:block;font-style:normal;font-size:7.4px}
.brand small{grid-column:1/3;font-size:3.6px;line-height:6px;color:#b4544e;white-space:nowrap}
.nv{font-size:15px}
.nv1{width:91px}.nv2{width:74px}
.create,.more{border:0;background:#101f9c;color:#fff;height:33px;margin:0;padding:0;font:700 15.3px "Liberation Sans",sans-serif}
.create{width:69px;border-radius:3px 0 0 3px}
.more{width:39px;margin-left:1px;border-radius:0 3px 3px 0;display:flex;justify-content:center;align-items:center;gap:1.5px}
.more i{width:5px;height:5px;border-radius:50%;background:#fff}
.cf-search{margin-left:854px;width:240px;height:33px;border-radius:3px;background:#cccaca;color:#efefef;display:flex;align-items:center;justify-content:flex-end;padding-right:11px}
.cf-help{margin-left:21px}.cf-tray{margin-left:39px}.cf-user{margin-left:27px}

.cf-body{display:flex;height:956px}
.cf-side{width:59px;flex:none;background:#f4f4f4;border-right:1px solid #c9c9c9;display:flex;flex-direction:column}
.space{width:36px;height:36px;border-radius:50%;background:#1f4f84;margin:16px 0 0 11px;color:#fff;display:flex;align-items:center;justify-content:center}
.s-pages{margin:29px 0 0 18px}
.s-tree{display:flex;align-items:center;margin:23px 0 0 22px}
.tri{width:0;height:0;border:3px solid transparent;border-top:5px solid #888;border-bottom:0;margin-left:8px}
.tri.dk{border-width:4px;border-top:4px solid #666;border-bottom:0;margin-left:4px}
.s-foot{margin-top:auto;height:88px;border-top:1px solid #c9c9c9}
.s-gear{display:flex;align-items:center;margin:13px 0 0 16px}
.s-chev{margin:29px 0 0 23px}
.cf-main{position:relative;width:1600px;display:flex;flex-direction:column}
.handle{position:absolute;left:4px;top:472px;width:1.5px;height:13px;background:repeating-linear-gradient(#999 0 2px,transparent 2px 5.500px)}
.doc{height:939px;overflow:hidden;margin-left:235px;width:1300px;border-left:1px solid #ccc;border-right:1px solid #ddd;padding:0 10px 0 11px}
.doc-in{display:flex;height:939px;border-left:1px solid #ddd;border-right:1px solid #ddd}
.col-a{width:373px;flex:none;border-right:1px solid #ddd;padding-left:13px}
.hscroll{display:flex;align-items:center;height:17px;width:1491px;margin-left:44px;background:#f0f0f0;padding:0 4px}
.hscroll span{width:1278px;height:17px;margin-left:182px;margin-right:6px;background:#cdcdcd}

/* Embedded mobile mockups */
.mock{font-family:Roboto,sans-serif;color:#505050}
.mock h4{font-weight:700;color:#444;white-space:nowrap}
.mock h5,.mock h6{font-weight:400;white-space:nowrap}
.mock h5{font-size:13.400px}
.mock h6{font-size:13.200px}
.mock b{color:#3c3c3c}
.mock p{font-size:12.5px;white-space:nowrap}
.mh{display:flex}
.mock1{width:327px;height:402px;background:#eaf4fe;display:flex;flex-direction:column;justify-content:flex-end;gap:8px;padding:0 13px 61px;overflow:hidden}
.mock1 .mc{height:139px;flex:none;background:#fff;border-radius:8px;padding:10px 0 0 8px}
.mock1 .mc:first-child{padding-top:85px}
.mock1 .mc:first-child p{margin-top:0}
.mock1 .mh svg{margin:0 0 0 2px}
.mock1 .mh div{margin-left:11px}
.mock1 h4{font-size:14.2px;line-height:18px;margin-top:-2px;padding-left:1px}
.mock1 h5{line-height:20px;margin-top:3px;padding-left:1px}
.mock1 h6{line-height:20px;margin-top:2px}
.mock1 p{line-height:15px;margin-top:14px}
.cap{font-family:"Liberation Sans",sans-serif;font-size:15.25px;line-height:21.500px;margin:18px 0 10px -2px;color:#333;white-space:nowrap}
.mock2{position:relative;width:329px;height:560px;border:1px solid #000;background:#eaf3fe;display:flex;flex-direction:column;padding:0 12px 0 15px}
.mock2 .mc{height:138px;flex:none;background:#fff;border-radius:7px;padding:11px 0 0 8px;margin-bottom:16.500px}
.m2h{position:relative;height:54px;flex:none;background:#4c84ff;margin:0 -12px 13px -15px;display:flex;align-items:center;padding-left:12px;color:#fff}
.m2h strong{font-size:16.6px;margin:2px 0 0 11px;width:221px}
.kebab{width:33px;height:33px;border-radius:8px;background:#fff;margin-left:12px;display:flex;flex-direction:column;align-items:center;justify-content:center;gap:2px}
.kebab i{width:5px;height:4.500px;background:#3f74ea}
.flag{position:absolute;right:3px;top:0;width:12px;height:6px;background:linear-gradient(#333,#333) 5px 0/2px 3px no-repeat #ffe81a}
.menu{position:absolute;left:212px;top:51px;width:113px;height:67px;background:#e9f2fc;border-radius:3px;box-shadow:0 2px 5px rgba(0,0,0,.4);z-index:2;font-size:12.4px;color:#777;padding-left:11px}
.menu::before{content:"";position:absolute;left:89px;top:-5px;border:5px solid transparent;border-top:0;border-bottom-color:#e9f2fc}
.menu span{display:flex;align-items:center;gap:7px;height:32px;margin-bottom:1px}
.menu .off{color:#d0d6dc}
.mock2 .mh svg{margin-left:3px}
.mock2 .mh>div{width:218px;margin-left:12px}
.mock2 .mc:first-of-type .mh svg{margin:0 2px 0 4px}
.mock2 .mh .ban{margin:-4px 0 0 -4px;color:#e0625f}
.mock2 h4{font-size:14.1px;line-height:16px;margin-top:-2px;padding-left:1.500px}
.mock2 h5{line-height:18px;margin-top:4px;padding-left:1.500px}
.mock2 h6{line-height:18px;margin-top:5px}
.mock2 p{line-height:14.800px;margin-top:15px}

/* Requirement table */
.tbl{width:879px;margin-left:11px;border-left:1px solid #ddd;border-right:1px solid #ddd;font-family:"Liberation Sans",Arial,sans-serif;font-size:15.25px;line-height:21.800px;color:#333;flex:none;height:786px}
.tr{display:grid;grid-template-columns:186px 342px 1fr;border-bottom:1px solid #d5d5d5;white-space:nowrap}
.tr>div{position:relative;padding:9px 0 0 11px}
.tr>div+div{border-left:1px solid #ddd}
.tr ul{list-style:none;margin-left:24px}
.tr li{position:relative}
.tr li::before{content:"";position:absolute;left:-13px;top:9px;width:5px;height:5px;border-radius:50%;background:#333}
.tr p+p{margin-top:10.700px}
.k{color:#000}
.tr>div.end{padding:3px 0 0 11px}
.r0{height:55px;overflow:hidden}
.r1{height:147px}.r2{height:180px}.r3{height:197.500px}.r4{height:103px}.r5{height:104px}
.tr.r3>div,.tr.r4>div,.tr.r5>div{padding-top:8px}
.snip{position:absolute;left:4px;top:44px;width:333px;height:65px;border:3px solid #f00;border-radius:2px;background:#fff;color:#000;padding:4px 0 0 4px}
.info{display:flex;gap:12px;margin-top:10px;width:326px;height:133px;border:1px solid #a3b3c6;border-radius:5px;background:#fcfcfc;padding:11px 0 0 11px}
.info svg{margin-top:1px}
.thumb{display:flex;align-items:center;justify-content:center;border:1px solid #000;margin-left:2px}
.t1{width:76px;height:62px}.t2{width:70px;height:59px;color:#e86a6a;padding-bottom:7px}

/* Windows taskbar */
.task{height:39px;flex:none;display:flex;background:linear-gradient(90deg,#45303f 0,#2b3049 90px,#22304a 200px,#223049 1500px,#26323f 1676px)}
.task>span{width:49px;height:100%;display:flex;align-items:center;justify-content:center;position:relative}
.task>span svg{width:24px;height:24px}
.task>span.on::after{content:"";position:absolute;left:5px;bottom:0;width:40px;height:2px;background:#76b9ed}
.task>span.two::after{background:linear-gradient(90deg,#76b9ed 0 31px,#4f7fa8 31px)}
.bdg{position:absolute;left:23px;top:18px;width:15px;height:15px;border-radius:50%;background:#f0473e;color:#fff;font:400 10px/15px "Open Sans",sans-serif;text-align:center}
.bdg.gr{background:#0d5146;font-size:9px}
.bdg.dr{background:#c4302b}
.ltr{position:absolute;left:18px;top:9px;color:#fff;font-size:15px;line-height:18px}
.tlt{position:absolute;left:15px;top:18px;color:#fff;font-size:9px;line-height:12px}
.sql{position:absolute;left:13px;top:6px;width:23px;font:700 11px/11px "Liberation Mono",monospace;letter-spacing:.3px;color:#000;text-shadow:0 0 1px #fff,0 0 1px #fff,0 0 2px #fff}
.clock{margin-left:auto;padding:1px 7px 0 0;font-size:11px;line-height:18px;color:#fff;text-align:right}
.rt{height:40px;background:linear-gradient(90deg,#4a3241 0,#4a3241 48px,#33304a 340px,#22304a 440px,#22304a 100%)}
.task>.start{width:48px}.task>.start svg{width:16px;height:16px}
.tsb{width:288px;height:40px;background:#f2f2f2;border:1px solid #b4b4b4;display:flex;align-items:center;padding-left:11px;font-size:13.8px;color:#333}
.tsb span{margin-left:12px;width:176px}
.task>.tv{width:50px}.task>.tv svg{width:17px;height:17px}

/* Chrome window */
.tabs{height:40px;flex:none;background:#51689c;display:flex;align-items:center;padding-left:6px}
.tsearch{width:27px;height:28px;border-radius:8px;background:#fff;display:flex;align-items:center;justify-content:center;margin-right:15px}
.tab{height:28px;display:flex;align-items:center;color:#fff;font-size:11.500px;white-space:nowrap}
.tab span{flex:1;margin-left:8px}
.x{width:10px;height:10px;background:linear-gradient(45deg,transparent 44%,currentColor 44% 56%,transparent 56%),linear-gradient(-45deg,transparent 44%,currentColor 44% 56%,transparent 56%);clip-path:inset(1px)}
.sep{width:2px;height:16px;background:#fff}
.t-a{width:227px;padding-right:14px}
.t-b{width:239px;padding:0 17px 0 10px}
.t-c{width:232px;height:34px;align-self:flex-end;background:#fff;color:#222;border-radius:8px 8px 0 0;padding:0 11px 0 9px}
.t-d{width:241px;padding:0 14px;color:#fff}
.t-d svg{color:#173a73}
.tab .fade{margin-left:7px;font-size:11.400px;background:linear-gradient(90deg,#fff 148px,#8d9cc0 166px);-webkit-background-clip:text;background-clip:text;color:transparent}
.t-e{width:236px;padding:0 14px 0 10px}
.plus{margin-left:10px}
.addr{height:47px;flex:none;background:#fff;border-bottom:1px solid #b9bdc5;display:flex;align-items:center;font-size:13.1px;color:#777}
.ba{margin-left:15px}.bb{margin-left:22px}.warn{margin-left:29px}
.ns{font-size:11.600px;color:#111;margin-left:5px;width:76px}
.ru{width:1183px}
.e1{margin-left:34px}.e2{margin-left:20px}
.dev{height:29px;flex:none;background:#ecf0f9;display:flex;align-items:center;font-size:12.500px;color:#222;white-space:nowrap;padding-top:2px}
.tr8{width:0;height:0;border:4.500px solid transparent;border-top:7px solid #222;border-bottom:0;margin-left:5px}
.tr8.w{margin-left:6px}
.tr8.g{border-top-color:#777;margin-left:7px}
.d1{margin-left:487px;width:157px}.d2{margin-left:14px;width:48px;color:#666}.d3{width:20px;color:#444}.d4{color:#666;width:55px}.d5{width:32px}.d6{margin-left:18px;width:76px}.d7{margin-left:18px;width:113px;color:#666}
.rot{margin-left:12px;margin-top:-3px}
.ruler{height:23px;flex:none;background:#f9fbff;border-top:1px solid #cfdffb;border-bottom:1px solid #cfdffb;display:flex;padding-left:35px}
.ruler i{width:2px;height:20px;background:#cfdffb;flex:none}
.ruler i:nth-child(2){margin-left:227px}.ruler i:nth-child(3){margin-left:139px}.ruler i:nth-child(4){margin-left:186px}.ruler i:nth-child(5){margin-left:26px}.ruler i:nth-child(6){margin-left:28px}.ruler i:nth-child(7){margin-left:348px}.ruler i:nth-child(8){margin-left:28px}.ruler i:nth-child(9){margin-left:26px}.ruler i:nth-child(10){margin-left:186px}.ruler i:nth-child(11){margin-left:139px}
.stage{height:901px;flex:none;background:#ecf0f9;position:relative;padding:21px 0 0 631px}
.phone{width:392px;height:846px;border:1px solid #dadde2;box-shadow:0 0 24px rgba(0,0,0,.07);font-family:Roboto,sans-serif;background:#eaf4fe;overflow:hidden;color:#555}
.ph{height:64px;background:#3a86ff;color:#fff;display:flex;align-items:center;padding-left:17px}
.burger{display:flex;flex-direction:column;gap:4px;width:17px}
.burger i{height:3px;background:#fff;border-radius:1px}
.ph strong{font-size:20px;margin-left:15px;width:279px}
.dots{display:flex;flex-direction:column;gap:1px;margin-left:23px}
.dots i{width:5px;height:5px;border-radius:50%;background:#fff}
.pb{position:relative;padding:18px 18px 0 14px;height:780px;overflow:hidden}
.psb{position:absolute;right:0;top:0;width:4px;height:565px;border-radius:2px;background:#bcc5cc}
.pc{height:146px;background:#fff;border-radius:10px;box-shadow:0 3px 12px rgba(60,90,130,.1);padding:11px 0 0 10px;margin-bottom:11px}
.p2{height:202px;margin-bottom:10px}.p3{margin-bottom:10px}.p4{height:166px;margin-bottom:10px}
.pr{display:flex;padding-left:5px}
.pr svg{margin-top:3px}
.pr div{margin-left:15.500px}
.pr.wide div{margin-left:27px}
.pc h4{font-size:17px;line-height:22px;font-weight:700}
.pc h5{font-size:15px;line-height:26px;font-weight:400;padding-top:1px}
.pc h6{font-size:15px;line-height:32px;font-weight:400;margin:-1px 0 10px;white-space:nowrap;word-spacing:-.3px}
.low h5{margin-top:1px}
.pc p{font-size:15px;line-height:18px;white-space:nowrap}
.mark{position:absolute;left:600px;top:249px;width:478px;height:224px;border:3px solid #f00;border-radius:2px}
.remark{position:absolute;left:1113px;top:256px;font:13.650px/20px "Noto Sans",sans-serif;letter-spacing:.04px;color:#f00}
```
